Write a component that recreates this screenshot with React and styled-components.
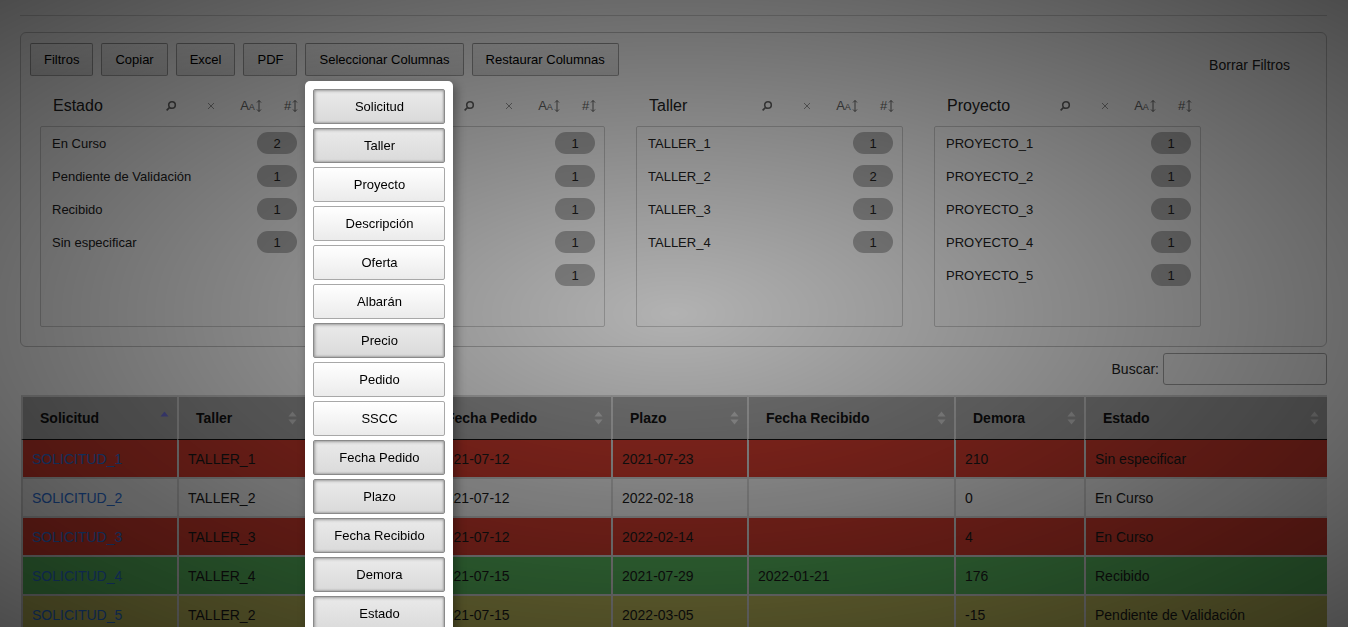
import React from "react";
import styled, { createGlobalStyle } from "styled-components";

const panes = [
  {
    title: "Estado",
    items: [
      ["En Curso", 2],
      ["Pendiente de Validación", 1],
      ["Recibido", 1],
      ["Sin especificar", 1],
    ],
  },
  {
    title: "Solicitud",
    items: [
      ["SOLICITUD_1", 1],
      ["SOLICITUD_2", 1],
      ["SOLICITUD_3", 1],
      ["SOLICITUD_4", 1],
      ["SOLICITUD_5", 1],
    ],
  },
  {
    title: "Taller",
    items: [
      ["TALLER_1", 1],
      ["TALLER_2", 2],
      ["TALLER_3", 1],
      ["TALLER_4", 1],
    ],
  },
  {
    title: "Proyecto",
    items: [
      ["PROYECTO_1", 1],
      ["PROYECTO_2", 1],
      ["PROYECTO_3", 1],
      ["PROYECTO_4", 1],
      ["PROYECTO_5", 1],
    ],
  },
];

const columns = [
  { name: "Solicitud", width: 156, visible: true },
  { name: "Taller", width: 128, visible: true },
  { name: "Proyecto" },
  { name: "Descripción" },
  { name: "Oferta" },
  { name: "Albarán" },
  { name: "Precio", width: 122, visible: true },
  { name: "Pedido" },
  { name: "SSCC" },
  { name: "Fecha Pedido", width: 184, visible: true },
  { name: "Plazo", width: 136, visible: true },
  { name: "Fecha Recibido", width: 207, visible: true },
  { name: "Demora", width: 130, visible: true },
  { name: "Estado", width: 243, visible: true },
];

const rows = [
  { tone: "red", cells: ["SOLICITUD_1", "TALLER_1", "1.250,00", "2021-07-12", "2021-07-23", "", "210", "Sin especificar"] },
  { tone: "plain", cells: ["SOLICITUD_2", "TALLER_2", "830,50", "2021-07-12", "2022-02-18", "", "0", "En Curso"] },
  { tone: "red", cells: ["SOLICITUD_3", "TALLER_3", "2.100,00", "2021-07-12", "2022-02-14", "", "4", "En Curso"] },
  { tone: "green", cells: ["SOLICITUD_4", "TALLER_4", "540,00", "2021-07-15", "2021-07-29", "2022-01-21", "176", "Recibido"] },
  { tone: "yellow", cells: ["SOLICITUD_5", "TALLER_2", "975,00", "2021-07-15", "2022-03-05", "", "-15", "Pendiente de Validación"] },
];

const tones = {
  red: "rgb(204, 58, 45)",
  plain: "#ededed",
  green: "rgb(88, 182, 94)",
  yellow: "rgb(190, 186, 92)",
};

const UpDown = () => (
  <svg width="6" height="14" viewBox="0 0 6 14" fill="none" stroke="currentColor" strokeWidth="1">
    <path d="M3 1.5V12.5M1 3.5L3 1.5L5 3.5M1 10.5L3 12.5L5 10.5" />
  </svg>
);

const SearchGlyph = () => (
  <svg width="12" height="12" viewBox="0 0 12 12" fill="none" stroke="currentColor" strokeWidth="1.6">
    <circle cx="7" cy="5" r="3.3" />
    <path d="M4.6 7.4L1.6 10.4" />
  </svg>
);

const CloseGlyph = () => (
  <svg width="8" height="8" viewBox="0 0 8 8" fill="none" stroke="currentColor" strokeWidth="1">
    <path d="M1 1L7 7M7 1L1 7" />
  </svg>
);

const SortIcon = ({ active }) => (
  <svg width="9" height="16" viewBox="0 0 9 16">
    <path d="M4.5 1.5L8.5 6.5H0.5Z" fill={active ? "#6f6fd8" : "#d0d0d0"} />
    {!active && <path d="M4.5 14.5L8.5 9.5H0.5Z" fill="#d0d0d0" />}
  </svg>
);

const App = () => {
  const visible = columns.filter((c) => c.visible);

  return (
    <>
      <GlobalStyle />
      <Page>
        <TopRule />
        <FilterBox>
          <Toolbar>
            <Button>Filtros</Button>
            <Button>Copiar</Button>
            <Button>Excel</Button>
            <Button>PDF</Button>
            <ButtonWrap>
              <Button>Seleccionar Columnas</Button>
              <Collection>
                {columns.map((c) => (
                  <ColButton key={c.name} $active={!!c.visible}>
                    {c.name}
                  </ColButton>
                ))}
              </Collection>
            </ButtonWrap>
            <Button>Restaurar Columnas</Button>
            <ClearAll>Borrar Filtros</ClearAll>
          </Toolbar>

          <Panes>
            {panes.map((pane) => (
              <Pane key={pane.title}>
                <PaneHeader>
                  <PaneTitle>{pane.title}</PaneTitle>
                  <PaneTools>
                    <Tool><SearchGlyph /></Tool>
                    <Tool $light><CloseGlyph /></Tool>
                    <Tool>
                      <Glyph>A<SmallA>A</SmallA></Glyph>
                      <UpDown />
                    </Tool>
                    <Tool>
                      <Glyph>#</Glyph>
                      <UpDown />
                    </Tool>
                  </PaneTools>
                </PaneHeader>
                <PaneList>
                  {pane.items.map(([label, count]) => (
                    <PaneRow key={label}>
                      <span>{label}</span>
                      <Pill>{count}</Pill>
                    </PaneRow>
                  ))}
                </PaneList>
              </Pane>
            ))}
          </Panes>
        </FilterBox>

        <SearchRow>
          <label>Buscar:</label>
          <SearchInput type="search" />
        </SearchRow>

        <Table>
          <colgroup>
            {visible.map((c) => (
              <col key={c.name} style={{ width: c.width }} />
            ))}
          </colgroup>
          <thead>
            <tr>
              {visible.map((c, i) => (
                <Th key={c.name}>
                  <HeadInner>
                    <span>{c.name}</span>
                    <SortIcon active={i === 0} />
                  </HeadInner>
                </Th>
              ))}
            </tr>
          </thead>
          <tbody>
            {rows.map((r) => (
              <Tr key={r.cells[0]} $tone={r.tone}>
                {r.cells.map((cell, i) => (
                  <Td key={i}>{i === 0 ? <Link href="#">{cell}</Link> : cell}</Td>
                ))}
              </Tr>
            ))}
          </tbody>
        </Table>
      </Page>
      <Backdrop />
    </>
  );
};

export default App;

const GlobalStyle = createGlobalStyle`
  html, body {
    margin: 0;
    padding: 0;
    overflow: hidden;
    background: #fff;
  }

  body {
    font-family: "Liberation Sans", Arial, sans-serif;
    font-size: 14px;
    color: #222;
  }

  * {
    box-sizing: border-box;
  }
`;

const Page = styled.div`
  padding: 0 21px 0 20px;
`;

const TopRule = styled.div`
  height: 16px;
  border-bottom: 1px solid #d4d4d4;
`;

const FilterBox = styled.section`
  margin-top: 16px;
  height: 315px;
  border: 1px solid #c6c6c6;
  border-radius: 6px;
  padding: 10px 10px 0 9px;
`;

const Toolbar = styled.div`
  display: flex;
  align-items: flex-start;
  gap: 8px;
`;

const ButtonWrap = styled.div`
  position: relative;
`;

const Button = styled.button`
  font-family: inherit;
  font-size: 13px;
  line-height: 19px;
  padding: 6px 13px;
  color: #000;
  border: 1px solid rgba(0, 0, 0, 0.32);
  border-radius: 2px;
  background: linear-gradient(to bottom, rgba(230, 230, 230, 0.1) 0%, rgba(0, 0, 0, 0.1) 100%);
  white-space: nowrap;
`;

const ClearAll = styled.button`
  margin: 14px 26px 0 auto;
  padding: 0;
  border: none;
  background: none;
  font-family: inherit;
  font-size: 14px;
  line-height: 17px;
  color: #222;
`;

const Collection = styled.div`
  position: absolute;
  top: calc(100% + 5px);
  left: 0;
  z-index: 20;
  width: 148px;
  padding: 8px 8px 4px;
  display: flex;
  flex-direction: column;
  gap: 4px;
  background: #fff;
  border-radius: 5px;
  box-shadow: 3px 4px 10px 1px rgba(0, 0, 0, 0.3);
`;

const ColButton = styled.button`
  height: 35px;
  font-family: inherit;
  font-size: 13px;
  color: #000;
  border-radius: 2px;
  border: 1px solid ${(p) => (p.$active ? "#8a8a8a" : "#a8a8a8")};
  background: ${(p) =>
    p.$active
      ? "linear-gradient(to bottom, #eaeaea 0%, #dadada 100%)"
      : "linear-gradient(to bottom, #ffffff 0%, #ebebeb 100%)"};
  box-shadow: ${(p) => (p.$active ? "inset 1px 1px 3px #999, inset -1px -1px 2px #b0b0b0" : "none")};
`;

const Panes = styled.div`
  display: flex;
  gap: 31px;
  margin: 12px 0 0 10px;
`;

const Pane = styled.div`
  width: 267px;
`;

const PaneHeader = styled.div`
  display: flex;
  align-items: center;
  height: 36px;
`;

const PaneTitle = styled.div`
  flex: 1;
  padding-left: 13px;
  font-size: 16px;
  color: #222;
`;

const PaneTools = styled.div`
  display: flex;
  margin-right: -4px;
`;

const Tool = styled.span`
  width: 40px;
  display: flex;
  align-items: center;
  justify-content: center;
  color: ${(p) => (p.$light ? "#999" : "#666")};
`;

const Glyph = styled.span`
  font-size: 13px;
  line-height: 14px;
  margin-right: 1px;
`;

const SmallA = styled.span`
  font-size: 9px;
`;

const PaneList = styled.div`
  margin-top: 2px;
  height: 201px;
  border: 1px solid #cfcfcf;
  border-radius: 2px;
`;

const PaneRow = styled.div`
  height: 33px;
  display: flex;
  align-items: center;
  justify-content: space-between;
  padding: 0 9px 1px 11px;
  font-size: 13px;
  color: #222;
`;

const Pill = styled.span`
  width: 40px;
  height: 22px;
  border-radius: 11px;
  background: #b8b8b8;
  display: flex;
  align-items: center;
  justify-content: center;
  font-size: 13px;
`;

const SearchRow = styled.div`
  display: flex;
  justify-content: flex-end;
  align-items: center;
  gap: 4px;
  margin-top: 6px;
  font-size: 14px;
`;

const SearchInput = styled.input`
  width: 164px;
  height: 32px;
  border: 1px solid #a9a9a9;
  border-radius: 3px;
  background: transparent;
`;

const Table = styled.table`
  margin: 10px 0 0 1px;
  width: 1306px;
  table-layout: fixed;
  border-collapse: separate;
  border-spacing: 0;
`;

const Th = styled.th`
  padding: 0;
  background: #a4a4a4;
  border-top: 2px solid #d8d8d8;
  border-left: 2px solid #d2d2d2;
  border-bottom: 1px solid #111;
  text-align: left;
  font-weight: bold;
  font-size: 14px;
  color: #111;
`;

const HeadInner = styled.div`
  height: 42px;
  display: flex;
  align-items: center;
  justify-content: space-between;
  padding: 0 8px 0 17px;
`;

const Tr = styled.tr`
  background: ${(p) => tones[p.$tone]};
`;

const Td = styled.td`
  padding: 9px 9px 8px;
  line-height: 20px;
  border-left: 2px solid #cfcfcf;
  border-bottom: 2px solid #cfcfcf;
  font-size: 14px;
  color: #1a1a1a;
  white-space: nowrap;
  overflow: hidden;
`;

const Link = styled.a`
  color: #2a6fd6;
  text-decoration: none;
`;

const Backdrop = styled.div`
  position: fixed;
  inset: 0;
  z-index: 10;
  background: radial-gradient(ellipse farthest-corner at center, rgba(0, 0, 0, 0.3) 0%, rgba(0, 0, 0, 0.7) 100%);
`;
